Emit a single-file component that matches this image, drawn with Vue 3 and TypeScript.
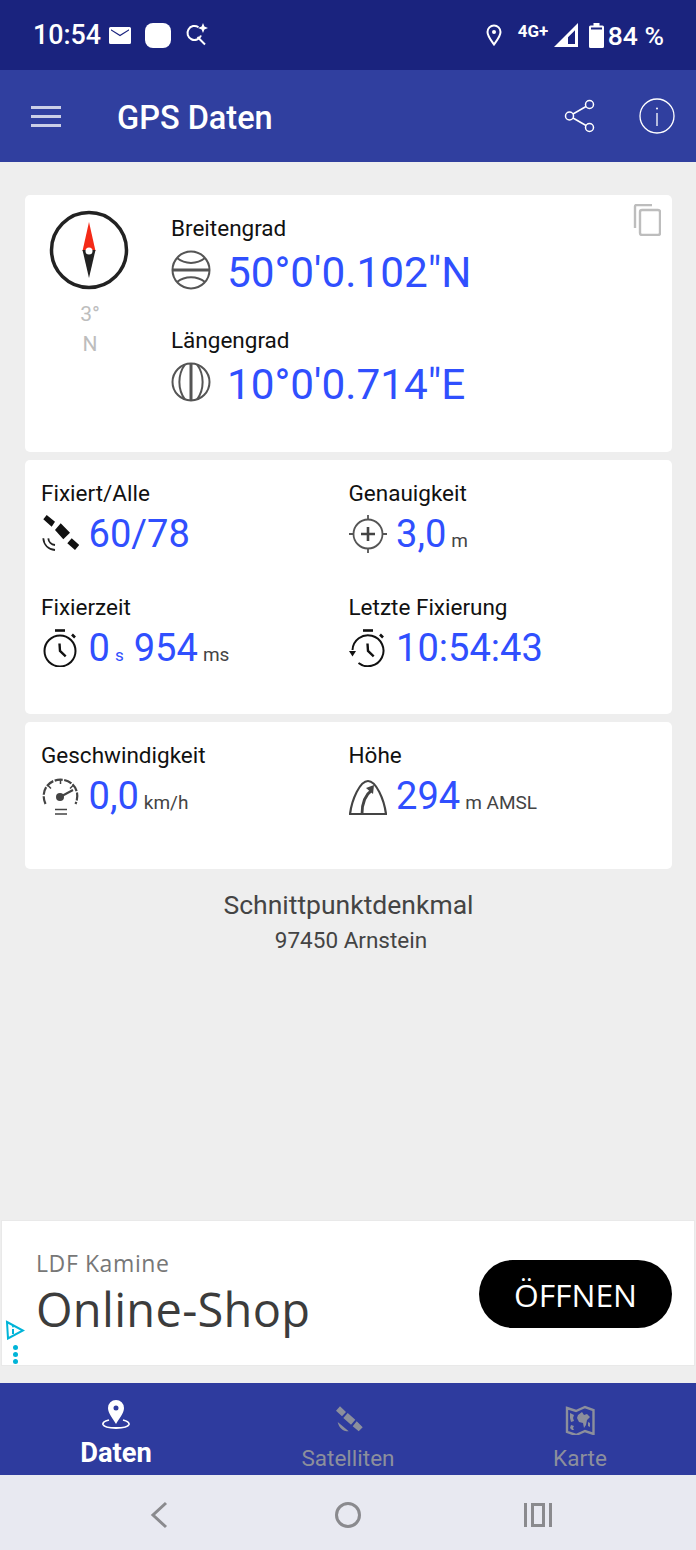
<script setup lang="ts">
const tabs = [
  { name: 'Daten', active: true },
  { name: 'Satelliten', active: false },
  { name: 'Karte', active: false }
];
</script>

<template>
  <div class="phone">
    <!-- Statusleiste -->
    <div class="statusbar">
      <div class="status-left">
        <span class="clock">10:54</span>
        <svg class="ic-mail" viewBox="0 0 22 17"><path d="M1.5 0h19A1.5 1.5 0 0 1 22 1.5v14a1.5 1.5 0 0 1-1.5 1.5h-19A1.5 1.5 0 0 1 0 15.500v-14A1.500 1.500 0 0 1 1.500 0zM2 3.500l9 5.800 9-5.800v-1.300l-9 5.600-9-5.600z" fill="#fff" fill-rule="evenodd"/></svg>
        <span class="app-dot"></span>
        <svg class="ic-lens" viewBox="0 0 24 24" fill="none" stroke="#fff" stroke-width="2"><path d="M13.500 4.200A7 7 0 1 0 16 12.500M12.500 14l7.500 7.500"/><path d="M18 0l1.400 3.600L23 5l-3.600 1.400L18 10l-1.400-3.600L13 5l3.600-1.400z" fill="#fff" stroke="none"/></svg>
      </div>
      <div class="status-right">
        <svg class="ic-pin" viewBox="0 0 16 22" fill="none" stroke="#fff" stroke-width="2"><path d="M8 20.500C4.500 15.500 1.500 12 1.500 8a6.500 6.500 0 0 1 13 0c0 4-3 7.500-6.500 12.500z"/><circle cx="8" cy="8" r="2" fill="#fff" stroke="none"/></svg>
        <span class="net">4G+</span>
        <svg class="ic-signal" viewBox="0 0 24 24"><path d="M24 0v24H0zM21 7.200l-7 7V21h7z" fill="#fff" fill-rule="evenodd"/></svg>
        <svg class="ic-batt" viewBox="0 0 15 25"><path d="M4.500 0h6v2.500h3A1.500 1.500 0 0 1 15 4v19.500a1.500 1.500 0 0 1-1.500 1.500h-12A1.500 1.500 0 0 1 0 23.500V4a1.500 1.500 0 0 1 1.500-1.500h3zM2 4.500V6.500h11V4.500z" fill="#fff" fill-rule="evenodd"/></svg>
        <span class="batt">84 %</span>
      </div>
    </div>

    <!-- Kopfzeile -->
    <header class="appbar">
      <div class="menu"><i></i><i></i><i></i></div>
      <h1>GPS Daten</h1>
      <svg class="ic-share" viewBox="0 0 32 34" fill="none" stroke="#fff" stroke-width="1.500"><circle cx="5.500" cy="17" r="4"/><circle cx="25.500" cy="5.500" r="4"/><circle cx="25.500" cy="28.500" r="4"/><path d="M9 15l13-7.500M9 19l13 7.500"/></svg>
      <svg class="ic-info" viewBox="0 0 36 36" fill="none" stroke="#fff" stroke-width="1.300"><circle cx="18" cy="18" r="17"/><path d="M18 15v13"/><circle cx="18" cy="10.500" r="1" fill="#fff" stroke="none"/></svg>
    </header>

    <main class="content">
      <!-- Position -->
      <section class="card card-pos">
        <div class="compass">
          <svg class="ic-compass" viewBox="0 0 80 80">
            <circle cx="40" cy="40" r="37.500" fill="none" stroke="#222" stroke-width="3.500"/>
            <path d="M40 12l-6.500 29h13z" fill="#f42a17"/>
            <path d="M40 68l-6.500-28h13z" fill="#222"/>
            <circle cx="40" cy="41" r="3.500" fill="#fff"/>
          </svg>
          <div class="deg">3°</div>
          <div class="deg dir">N</div>
        </div>
        <div class="coords">
          <div class="label">Breitengrad</div>
          <div class="coord-row">
            <svg class="ic-globe" viewBox="0 0 40 40" fill="none" stroke="#555" stroke-width="2"><circle cx="20" cy="20" r="18.500"/><path d="M1.500 20h37" stroke-width="3"/><path d="M6 8c8 6.500 20 6.500 28 0M6 32c8-6.500 20-6.500 28 0"/></svg>
            <span class="coord">50°0'0.102"N</span>
          </div>
          <div class="label second">Längengrad</div>
          <div class="coord-row row-two">
            <svg class="ic-globe" viewBox="0 0 40 40" fill="none" stroke="#555" stroke-width="2"><circle cx="20" cy="20" r="18.500"/><path d="M20 1.500v37" stroke-width="3"/><path d="M14 2.500c-7.500 10-7.500 25 0 35M26 2.500c7.500 10 7.500 25 0 35"/></svg>
            <span class="coord">10°0'0.714"E</span>
          </div>
        </div>
        <svg class="ic-copy" viewBox="0 0 28 32" fill="none" stroke="#bdbdbd" stroke-width="2.400"><path d="M2 24V2.500A1.500 1.500 0 0 1 3.500 1H19"/><rect x="7" y="6" width="20" height="25" rx="2"/></svg>
      </section>

      <!-- Fix -->
      <section class="card card-fix">
        <div class="cell">
          <div class="label">Fixiert/Alle</div>
          <div class="val-row">
            <svg class="ic" viewBox="0 0 38 38"><path d="M5.700 0L14 6.700l-3.300 5-8.400-7.400zM19.700 8.300L29 17.700l-6.700 6.600L14 15zM30.700 23.300l7.600 6.700L34 35l-7.700-6.700z" fill="#111"/><path d="M2.300 23.300c.5 6.500 5 11 11.700 11.700M7.300 23.300c.3 3.500 3 6.300 6.700 6.700" fill="none" stroke="#222" stroke-width="1.800"/></svg>
            <span class="num">60/78</span>
          </div>
        </div>
        <div class="cell">
          <div class="label">Genauigkeit</div>
          <div class="val-row">
            <svg class="ic" viewBox="0 0 38 38" fill="none" stroke="#555" stroke-width="1.800"><circle cx="19" cy="19" r="14.500"/><path d="M19 0v5M19 33v5M0 19h5M33 19h5"/><path d="M12 19h14M19 12v14" stroke="#444" stroke-width="2.600"/></svg>
            <span class="num">3,0</span><span class="unit">m</span>
          </div>
        </div>
        <div class="cell">
          <div class="label">Fixierzeit</div>
          <div class="val-row">
            <svg class="ic" viewBox="0 0 38 38" fill="none" stroke="#111" stroke-width="2"><circle cx="19" cy="22" r="15.500"/><path d="M14 1.500h10" stroke-width="2.600"/><path d="M31 5.500l3 3" stroke-width="2.600"/><path d="M18.500 14.500l.5 7.500 5.700 5.300" stroke-width="2.400"/></svg>
            <span class="num">0</span><span class="unit blue">s</span><span class="num ms-num">954</span><span class="unit">ms</span>
          </div>
        </div>
        <div class="cell">
          <div class="label">Letzte Fixierung</div>
          <div class="val-row">
            <svg class="ic" viewBox="0 0 38 38" fill="none" stroke="#111" stroke-width="2"><path d="M3.500 21a15.500 15.500 0 1 1 6 13" /><path d="M14 1.500h10" stroke-width="2.600"/><path d="M31 5.500l3 3" stroke-width="2.600"/><path d="M18.500 14.500l.5 7.500 5.700 5.300" stroke-width="2.400"/><path d="M0 22h7l-3.500 5.500z" fill="#111" stroke="none"/></svg>
            <span class="num">10:54:43</span>
          </div>
        </div>
      </section>

      <!-- Bewegung -->
      <section class="card card-move">
        <div class="cell">
          <div class="label">Geschwindigkeit</div>
          <div class="val-row">
            <svg class="ic" viewBox="0 0 38 38" fill="none" stroke="#444" stroke-width="2.200"><path d="M4.500 27C-1 15 6.500 2.700 19.500 2.700S40 15 34.500 27" stroke-dasharray="8 1.500"/><path d="M19.500 3v4M7 8.500l3 3M32 8.500l-3 3" stroke-width="1.500"/><circle cx="19" cy="20" r="4" fill="#444" stroke="none"/><path d="M19 20l13-7" stroke-width="2"/><path d="M14 32.500h12M14 37h12" stroke-width="1.600"/></svg>
            <span class="num">0,0</span><span class="unit">km/h</span>
          </div>
        </div>
        <div class="cell">
          <div class="label">Höhe</div>
          <div class="val-row">
            <svg class="ic" viewBox="0 0 38 38" fill="none" stroke="#444" stroke-width="2.200"><path d="M1 37C3 22 11 4 19 4s16 18 18 33z"/><path d="M13 37c0-10 3-19 10-24" stroke-width="2.800"/><path d="M25 8l-1 9-7-6z" fill="#444" stroke="none"/></svg>
            <span class="num">294</span><span class="unit">m AMSL</span>
          </div>
        </div>
      </section>

      <div class="address">
        <div class="addr-title">Schnittpunktdenkmal</div>
        <div class="addr-sub">97450 Arnstein</div>
      </div>
    </main>

    <!-- Werbung -->
    <aside class="ad">
      <div class="ad-text">
        <div class="ad-brand">LDF Kamine</div>
        <div class="ad-title">Online-Shop</div>
      </div>
      <button class="ad-btn">ÖFFNEN</button>
      <div class="ad-marks">
        <svg class="ic-adchoice" viewBox="0 0 20 20" fill="none" stroke="#00b4d8" stroke-width="2"><path d="M2 2l16 8.500-15 8z"/><path d="M8 9v5" /><circle cx="8" cy="6.500" r="1" fill="#00b4d8" stroke="none"/></svg>
        <i></i><i></i><i></i>
      </div>
    </aside>

    <!-- Tabs -->
    <nav class="tabs">
      <div v-for="tab in tabs" :key="tab.name" class="tab" :class="{ active: tab.active }">
        <svg v-if="tab.name === 'Daten'" class="tab-ic" viewBox="0 0 30 30"><path d="M15 0a8 8 0 0 1 8 8c0 5-5 11-8 16-3-5-8-11-8-16a8 8 0 0 1 8-8zm0 5.500a2.500 2.500 0 1 0 0 5 2.500 2.500 0 0 0 0-5z" fill="#fff" fill-rule="evenodd"/><path d="M8 20c-4 1-6.500 2.500-6 4.500 1 2.500 7 3.500 13 3.500s12-1 13-3.500c.5-2-2-3.500-6-4.500" fill="none" stroke="#fff" stroke-width="1.800"/></svg>
        <svg v-else-if="tab.name === 'Satelliten'" class="tab-ic" viewBox="0 0 30 30"><path d="M7 1.300L13 7l-4 4.300-6-5.600zM14.700 8l7.600 6.700-4.300 5-7.700-6.700zM23.700 16.300l6 6-4 4-6-5zM4.700 17l11 9.300C10 26.500 6 23 4.700 17z" fill="#8c8f9c"/></svg>
        <svg v-else class="tab-ic" viewBox="0 0 30 30"><path d="M2 3l9 3 9-4 8.500 3v24l-8.500-3-9 4-9-3z" fill="none" stroke="#8c8f9c" stroke-width="2.400"/><path d="M13 10l4-3 2 3 3-1 3 3-3 3-1 5-2 3-1-5-4-1-2-4zM5 8l4 2-1 3 1 3-3 1-1-4zM23 17l2 1v4l-2-1zM6 20l3 1-1 2 1 2-2 0-2-2z" fill="#8c8f9c"/></svg>
        <span>{{ tab.name }}</span>
      </div>
    </nav>

    <!-- Navigationsleiste -->
    <div class="navbar">
      <svg class="nav-ic" viewBox="0 0 20 28" fill="none" stroke="#8a8a8e" stroke-width="3"><path d="M17 2L4 14l13 12"/></svg>
      <svg class="nav-ic home" viewBox="0 0 28 28" fill="none" stroke="#8a8a8e" stroke-width="3"><circle cx="14" cy="14" r="11.500"/></svg>
      <svg class="nav-ic recent" viewBox="0 0 28 24" fill="none" stroke="#8a8a8e" stroke-width="3"><path d="M1.500 0v24M26.500 0v24"/><rect x="8.500" y="1.500" width="11" height="21"/></svg>
    </div>
  </div>
</template>

<style>
body {
  margin: 0;
}
</style>

<style scoped>
.phone {
  width: 696px;
  height: 1550px;
  display: flex;
  flex-direction: column;
  background: #eeeeee;
  font-family: Roboto, sans-serif;
  overflow: hidden;
}

.statusbar {
  height: 70px;
  box-sizing: border-box;
  flex: none;
  background: #1a237e;
  color: #fff;
  display: flex;
  justify-content: space-between;
  padding: 0 32px 0 33px;
}

.status-left,
.status-right {
  display: flex;
  align-items: center;
}

.clock {
  font-size: 26.800px;
  font-weight: 500;
}

.ic-mail {
  width: 22px;
  height: 17px;
  margin-left: 8px;
}

.app-dot {
  width: 26px;
  height: 25px;
  background: #fff;
  border-radius: 8px;
  margin-left: 14px;
}

.ic-lens {
  width: 24px;
  height: 24px;
  margin-left: 14px;
}

.ic-pin {
  width: 16px;
  height: 22px;
}

.net {
  font-size: 17px;
  font-weight: 700;
  margin: -9px 0 0 16px;
  width: 33px;
}

.ic-signal {
  width: 24px;
  height: 24px;
  margin-left: 3px;
}

.ic-batt {
  width: 15px;
  height: 25px;
  margin-left: 11px;
}

.batt {
  font-size: 26.500px;
  font-weight: 500;
  margin-left: 4px;
}

.appbar {
  height: 92px;
  flex: none;
  background: #303f9f;
  display: flex;
  align-items: center;
  padding-left: 31px;
  color: #fff;
}

.menu {
  width: 30px;
  display: flex;
  flex-direction: column;
  gap: 6px;
  opacity: 0.75;
}

.menu i {
  height: 3px;
  background: #fff;
}

.appbar h1 {
  margin: 0 0 0 56px;
  padding-top: 4px;
  font-size: 32.500px;
  font-weight: 500;
  flex: 1;
}

.ic-share {
  width: 32px;
  height: 34px;
  margin-right: 43px;
}

.ic-info {
  width: 36px;
  height: 36px;
  margin-right: 21px;
}

.content {
  flex: 1;
  padding: 33px 24px 0 25px;
}

.card {
  background: #fff;
  border-radius: 5px;
  margin-bottom: 8px;
}

.card-pos {
  height: 257px;
  position: relative;
  display: flex;
  box-sizing: border-box;
  padding: 15px 0 0 25px;
}

.compass {
  width: 80px;
  text-align: center;
}

.ic-compass {
  width: 80px;
  height: 80px;
  display: block;
  margin-left: -1px;
}

.deg {
  color: #bdbdbd;
  font-size: 21px;
  line-height: 30px;
  margin-top: 9px;
}

.deg.dir {
  margin-top: 0;
}

.coords {
  margin-left: 41px;
  padding-top: 3px;
}

.label {
  font-size: 22.500px;
  line-height: 30px;
  margin-bottom: 2px;
  color: #111;
}

.label.second {
  margin-top: 30px;
}

.coord-row {
  display: flex;
  align-items: center;
  height: 50px;
}

.row-two {
  margin-top: 1px;
}

.ic-globe {
  width: 40px;
  height: 40px;
}

.coord {
  font-size: 42.300px;
  color: #304ffe;
  margin-left: 16px;
  padding-top: 4px;
}

.ic-copy {
  position: absolute;
  top: 9px;
  right: 11px;
  width: 28px;
  height: 32px;
}

.card-fix,
.card-move {
  display: grid;
  grid-template-columns: 307.500px 1fr;
  padding: 18px 16px 0;
  box-sizing: border-box;
}

.card-fix {
  height: 254px;
  grid-auto-rows: 114px;
}

.card-move {
  height: 147px;
}

.val-row {
  display: flex;
  align-items: baseline;
  height: 50px;
  box-sizing: border-box;
  padding-top: 2px;
}

.ic {
  width: 38px;
  height: 38px;
  align-self: center;
  margin: 0 9.500px 4px 0;
}

.num {
  font-size: 38.100px;
  color: #304ffe;
}

.unit {
  font-size: 19px;
  color: #444;
  margin-left: 5px;
}

.unit.blue {
  color: #304ffe;
  font-size: 17px;
}

.ms-num {
  margin-left: 10px;
}

.address {
  text-align: center;
  color: #444;
  padding-top: 10px;
}

.addr-title {
  font-size: 26.500px;
  line-height: 36px;
}

.addr-sub {
  font-size: 22.500px;
  line-height: 34px;
  padding-left: 5px;
}

.ad {
  flex: none;
  height: 146px;
  margin: 0 1px 17px;
  background: #fff;
  box-shadow: inset 0 0 0 1px #e9e9e9;
  display: flex;
  align-items: center;
  justify-content: space-between;
  position: relative;
  padding: 0 23px 0 35px;
  box-sizing: border-box;
}

.ad-text {
  font-family: "Open Sans", sans-serif;
  padding-bottom: 2px;
}

.ad-brand {
  font-size: 23px;
  color: #777;
  line-height: 32px;
  letter-spacing: 0.600px;
  margin-bottom: 2px;
}

.ad-title {
  font-size: 47px;
  color: #3c3c3c;
  line-height: 56px;
  letter-spacing: 0.300px;
}

.ad-btn {
  width: 193px;
  height: 68px;
  margin-top: 2px;
  border: none;
  border-radius: 34px;
  background: #000;
  color: #fff;
  font-family: "Open Sans", sans-serif;
  font-size: 31.800px;
  padding: 0;
}

.ad-marks {
  position: absolute;
  left: 4px;
  bottom: 2px;
  width: 20px;
  display: flex;
  flex-direction: column;
  align-items: center;
  gap: 2px;
}

.ad-marks i {
  width: 5px;
  height: 5px;
  border-radius: 50%;
  background: #00b4d8;
}

.ic-adchoice {
  width: 20px;
  height: 20px;
  margin-bottom: 3px;
}

.tabs {
  flex: none;
  height: 92px;
  background: #2e3b9e;
  display: grid;
  grid-template-columns: 232px 232px 232px;
}

.tab {
  display: flex;
  flex-direction: column;
  align-items: center;
  color: #8c8f9c;
  font-size: 22.500px;
  padding-top: 22px;
  box-sizing: border-box;
}

.tab span {
  line-height: 30px;
  margin-top: 8px;
}

.tab.active {
  color: #fff;
  font-weight: 700;
  font-size: 27.300px;
  padding-top: 17px;
}

.tab.active span {
  margin-top: 7px;
  line-height: 32px;
}

.tab-ic {
  width: 30px;
  height: 30px;
}

.navbar {
  flex: none;
  height: 75px;
  box-sizing: border-box;
  padding-top: 4px;
  background: #e8e9f1;
  display: grid;
  grid-template-columns: 316px 64px 316px;
  align-items: center;
  justify-items: center;
}

.nav-ic {
  width: 20px;
  height: 28px;
  justify-self: end;
  margin-right: 147px;
}

.nav-ic.home {
  width: 28px;
  justify-self: center;
  margin: 0;
}

.nav-ic.recent {
  width: 28px;
  height: 24px;
  justify-self: start;
  margin: 0 0 0 144px;
}
</style>
